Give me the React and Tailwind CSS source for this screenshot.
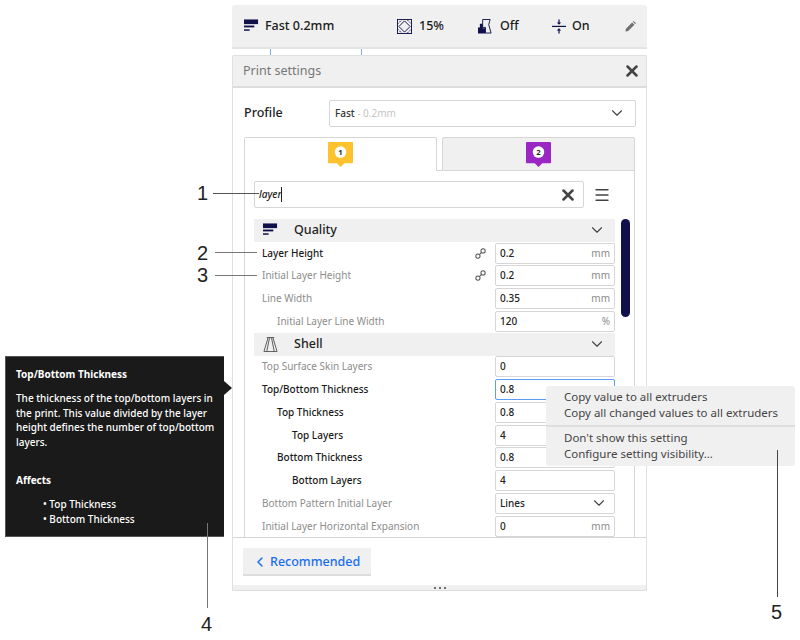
import React from "react";
import { ChevronDown, ChevronLeft, X, Menu } from "lucide-react";

const FONT = "font-['Noto_Sans',sans-serif]";

function ProfileIcon({ className }) {
  return (
    <svg viewBox="0 0 16 14" className={className} fill="#10114a">
      <rect x="0" y="0" width="15" height="5" />
      <rect x="0" y="6.5" width="11" height="2" />
      <rect x="0" y="10.5" width="6" height="1.6" />
    </svg>
  );
}

function InfillIcon() {
  return (
    <svg viewBox="0 0 16 16" className="w-[15px] h-[15px]" fill="none" stroke="#10114a" strokeWidth="1">
      <rect x="0.5" y="0.5" width="15" height="15" />
      <path d="M8 2 L14 8 L8 14 L2 8 Z" />
      <path d="M1 5 L5 1 M11 1 L15 5 M1 11 L5 15 M11 15 L15 11" strokeDasharray="1.5 1" />
    </svg>
  );
}

function SupportIcon() {
  return (
    <svg viewBox="0 0 15 16" className="w-[14px] h-[15px]">
      <path d="M5 0.5 H13 L11.5 6 L14 15 H8 V9 H5 Z" fill="none" stroke="#10114a" strokeWidth="1" />
      <path d="M0 15.5 V9 H2 V5 H5 V10 H8 V15.5 Z" fill="#10114a" />
    </svg>
  );
}

function AdhesionIcon() {
  return (
    <svg viewBox="0 0 16 16" className="w-[14px] h-[15px]" fill="#10114a">
      <rect x="0" y="7.2" width="16" height="1.4" />
      <path d="M8 0 L8 4.5 M8 11.5 L8 16" stroke="#10114a" strokeWidth="1.4" />
      <path d="M5.5 3.5 L8 6 L10.5 3.5 Z M5.5 12.5 L8 10 L10.5 12.5 Z" />
    </svg>
  );
}

function PencilIcon() {
  return (
    <svg viewBox="0 0 12 12" className="w-[11px] h-[11px]" fill="#707070">
      <path d="M0.5 11.5 L1 8.5 L7.8 1.7 L10.3 4.2 L3.5 11 Z" />
      <path d="M8.6 0.9 L9.5 0 L12 2.5 L11.1 3.4 Z" />
    </svg>
  );
}

function ShellIcon() {
  return (
    <svg viewBox="0 0 16 16" className="w-[15px] h-[15px]" fill="none" stroke="#555" strokeWidth="1">
      <path d="M4 0.5 H12" />
      <path d="M5.5 0.5 L1 15.5 H15 L10.5 0.5" />
      <path d="M7 0.5 L4 15.5 M9 0.5 L12 15.5" />
    </svg>
  );
}

function LinkIcon() {
  return (
    <svg viewBox="0 0 12 12" className="w-[11px] h-[11px] mr-[9px]" fill="none" stroke="#555" strokeWidth="1.1">
      <circle cx="8.8" cy="3.2" r="2.3" />
      <circle cx="3.2" cy="8.8" r="2.3" />
      <path d="M4.8 7.2 L7.2 4.8" />
    </svg>
  );
}

function ExtruderBadge({ color, n }) {
  return (
    <svg viewBox="0 0 26 26" className="w-[25px] h-[25px]">
      <path d="M1 0 H25 A1 1 0 0 1 26 1 V21 A1 1 0 0 1 25 22 H17 L13 26 L9 22 H1 A1 1 0 0 1 0 21 V1 A1 1 0 0 1 1 0 Z" fill={color} />
      <circle cx="13" cy="10.5" r="6" fill="#fff" />
      <text x="13" y="13.5" textAnchor="middle" fontSize="8" fontWeight="700" fill="#222" fontFamily="Noto Sans, sans-serif">{n}</text>
    </svg>
  );
}

function SectionHeader({ icon, title }) {
  return (
    <div className="h-[22.75px] bg-[#f0f0f0] flex items-center pl-[9px] pr-[9px]">
      <div className="w-[31px] flex items-center">{icon}</div>
      <span className="text-[12.5px] font-medium text-[#222]">{title}</span>
      <ChevronDown className="ml-auto w-[18px] h-[18px] text-[#444]" strokeWidth={1.5} />
    </div>
  );
}

function Row({ label, value, unit, indent = 0, active, link, focused, select }) {
  const pad = indent === 2 ? "pl-[38px]" : indent === 1 ? "pl-[23px]" : "pl-[8px]";
  return (
    <div className="h-[22.75px] flex items-center">
      <span className={`flex-1 ${pad} text-[10px] ${active ? "text-[#1a1a1a] font-medium" : "text-[#8c8c8c]"} whitespace-nowrap`}>{label}</span>
      {link && <LinkIcon />}
      <div className={`w-[120px] h-[21px] shrink-0 bg-white border ${focused ? "border-[#5b9cf5]" : "border-[#d6d6d6]"} rounded-[2px] flex items-center pl-[4px] pr-[4px] text-[10px] font-medium text-[#222]`}>
        <span>{value}</span>
        {unit && <span className="ml-auto font-normal text-[#8c8c8c]">{unit}</span>}
        {select && <ChevronDown className="ml-auto mr-[2px] w-[18px] h-[18px] text-[#444]" strokeWidth={1.5} />}
      </div>
    </div>
  );
}

export default function App() {
  return (
    <div className={`relative w-[800px] h-[640px] bg-white overflow-hidden ${FONT}`}>
      <div className="ml-[232px] w-[415px] pt-[5px]">
        {/* Top summary bar */}
        <div className="h-[44px] bg-[#f0f0f0] rounded-t-[3px] border-b-2 border-[#e4e4e4] flex items-center pl-[12px] pr-[11px] text-[12.5px] font-medium text-[#1a1a1a]">
          <div className="flex items-center gap-[6px] w-[153px]">
            <ProfileIcon className="w-[15px] h-[14px]" />
            <span>Fast 0.2mm</span>
          </div>
          <div className="flex items-center gap-[7px] w-[81px]">
            <InfillIcon />
            <span>15%</span>
          </div>
          <div className="flex items-center gap-[8px] w-[74px]">
            <SupportIcon />
            <span>Off</span>
          </div>
          <div className="flex items-center gap-[6px]">
            <AdhesionIcon />
            <span>On</span>
          </div>
          <div className="ml-auto">
            <PencilIcon />
          </div>
        </div>
        {/* ticks between bar and panel */}
        <div className="h-[6px] flex">
          <div className="ml-[38px] w-px bg-[#7fb0f0]" />
          <div className="ml-[90px] w-px bg-[#7fb0f0]" />
        </div>

        {/* Print settings panel */}
        <div className="h-[536px] border border-[#e0e0e0] border-b-0 rounded-t-[2px] flex flex-col">
          <div className="h-[32px] shrink-0 bg-[#f0f0f0] border-b-2 border-[#dcdcdc] flex items-center pl-[10px] pr-[5px]">
            <span className="text-[12.5px] text-[#777]">Print settings</span>
            <X className="ml-auto w-[18px] h-[18px] text-[#444]" strokeWidth={3.4} />
          </div>

          <div className="h-[12px] shrink-0" />
          <div className="h-[26px] shrink-0 flex items-center pl-[11px] pr-[10px]">
            <span className="w-[85px] text-[12.5px] font-medium text-[#222]">Profile</span>
            <div className="flex-1 h-[27px] border border-[#d6d6d6] rounded-[2px] flex items-center pl-[5px] pr-[9px] text-[10px]">
              <span className="text-[#333] font-medium">Fast</span>
              <span className="text-[#c4c4c4]">&nbsp;- 0.2mm</span>
              <ChevronDown className="ml-auto w-[18px] h-[18px] text-[#444]" strokeWidth={1.5} />
            </div>
          </div>

          <div className="h-[11px] shrink-0" />
          {/* Extruder tabs */}
          <div className="h-[34px] shrink-0 flex pl-[11px] pr-[11px]">
            <div className="w-[193px] h-[34px] bg-white border border-b-0 border-[#d6d6d6] rounded-t-[2px] flex justify-center pt-[4px] relative z-10">
              <ExtruderBadge color="#fec22f" n="1" />
            </div>
            <div className="w-[5px] border-b border-[#d6d6d6]" />
            <div className="flex-1 h-[34px] bg-[#f0f0f0] border border-[#d6d6d6] rounded-t-[2px] flex justify-center pt-[4px]">
              <ExtruderBadge color="#9a27c4" n="2" />
            </div>
          </div>

          {/* Tab body */}
          <div className="h-[367px] shrink-0 mx-[11px] border-x border-[#d6d6d6] -mt-px overflow-hidden">
            <div className="h-[11px]" />
            <div className="flex items-center pl-[9px] h-[27px]">
              <div className="w-[330px] h-[27px] border border-[#d6d6d6] rounded-[2px] flex items-center pl-[4px] pr-[6px]">
                <span className="text-[10px] italic font-medium text-[#222]">layer</span>
                <span className="w-px h-[15px] bg-[#222]" />
                <X className="ml-auto w-[18px] h-[18px] text-[#444]" strokeWidth={3.4} />
              </div>
              <Menu className="ml-[9px] w-[18px] h-[18px] text-[#444]" strokeWidth={1.8} />
            </div>
            <div className="h-[11px]" />

            <div className="flex pl-[9px]">
              <div className="w-[361px] shrink-0">
                <SectionHeader icon={<ProfileIcon className="w-[15px] h-[14px]" />} title="Quality" />
                <Row label="Layer Height" value="0.2" unit="mm" active link />
                <Row label="Initial Layer Height" value="0.2" unit="mm" link />
                <Row label="Line Width" value="0.35" unit="mm" />
                <Row label="Initial Layer Line Width" value="120" unit="%" indent={1} />
                <SectionHeader icon={<ShellIcon />} title="Shell" />
                <Row label="Top Surface Skin Layers" value="0" />
                <Row label="Top/Bottom Thickness" value="0.8" active focused />
                <Row label="Top Thickness" value="0.8" indent={1} active />
                <Row label="Top Layers" value="4" indent={2} active />
                <Row label="Bottom Thickness" value="0.8" indent={1} active />
                <Row label="Bottom Layers" value="4" indent={2} active />
                <Row label="Bottom Pattern Initial Layer" value="Lines" select />
                <Row label="Initial Layer Horizontal Expansion" value="0" unit="mm" />
              </div>
              {/* scrollbar */}
              <div className="ml-[6px] w-[9px] h-[98px] rounded-full bg-[#10114a]" />
            </div>
          </div>

          {/* Footer */}
          <div className="flex-1 border-t border-[#d6d6d6] pt-[10px] pl-[10px]">
            <button className="w-[128px] h-[28px] bg-[#f0f0f0] border-b-2 border-[#dcdcdc] flex items-center pl-[9px] pt-[2px] gap-[2px] text-[12.5px] font-medium text-[#196ef0]">
              <ChevronLeft className="w-[16px] h-[16px]" strokeWidth={2.2} />
              <span>Recommended</span>
            </button>
          </div>
          <div className="h-[6px] shrink-0 bg-[#f0f0f0] border-b border-[#dcdcdc] rounded-b-[2px] flex items-center justify-center gap-[3px]">
            <span className="w-[2px] h-[2px] rounded-full bg-[#444]" />
            <span className="w-[2px] h-[2px] rounded-full bg-[#444]" />
            <span className="w-[2px] h-[2px] rounded-full bg-[#444]" />
          </div>
        </div>
      </div>

      {/* Tooltip */}
      <div className="absolute left-[5px] top-[356px] w-[219px] h-[181px] bg-[#1a1a1a] border border-[#555] border-r-0 pl-[10px] pr-[4px] pt-[10px] text-[10px] leading-[14.4px] text-white font-medium">
        <div className="font-bold">Top/Bottom Thickness</div>
        <p className="mt-[10px]">The thickness of the top/bottom layers in the print. This value divided by the layer height defines the number of top/bottom layers.</p>
        <div className="font-bold mt-[24px]">Affects</div>
        <ul className="mt-[10px] pl-[27px]">
          <li>• Top Thickness</li>
          <li>• Bottom Thickness</li>
        </ul>
      </div>
      <div className="absolute left-[224px] top-[381px] w-0 h-0 border-y-[7.5px] border-y-transparent border-l-[8px] border-l-[#1a1a1a]" />

      {/* Context menu */}
      <div className="absolute left-[546px] top-[386px] w-[249px] h-[80px] bg-[#f0f0f0] rounded-[3px] text-[11.5px] leading-[16px] text-[#444] pl-[18px]">
        <div className="pt-[3px]">Copy value to all extruders</div>
        <div>Copy all changed values to all extruders</div>
        <div className="-ml-[18px] mt-[4px] h-[2px] bg-[#dedede]" />
        <div className="mt-[3px]">Don't show this setting</div>
        <div>Configure setting visibility...</div>
      </div>

      {/* Callouts */}
      <div className="absolute left-[197px] top-[181px] text-[20px] leading-[24px] font-['Liberation_Sans',sans-serif] text-[#222]">1</div>
      <div className="absolute left-[213px] top-[193px] w-[46px] h-px bg-[#555]" />
      <div className="absolute left-[197px] top-[241px] text-[20px] leading-[24px] font-['Liberation_Sans',sans-serif] text-[#222]">2</div>
      <div className="absolute left-[215px] top-[252px] w-[42px] h-px bg-[#777]" />
      <div className="absolute left-[197px] top-[263px] text-[20px] leading-[24px] font-['Liberation_Sans',sans-serif] text-[#222]">3</div>
      <div className="absolute left-[215px] top-[275px] w-[42px] h-px bg-[#777]" />
      <div className="absolute left-[207px] top-[523px] w-px h-[85px] bg-[#777]" />
      <div className="absolute left-[201px] top-[612px] text-[20px] leading-[24px] font-['Liberation_Sans',sans-serif] text-[#222]">4</div>
      <div className="absolute left-[777px] top-[450px] w-px h-[147px] bg-[#444]" />
      <div className="absolute left-[771px] top-[600px] text-[20px] leading-[24px] font-['Liberation_Sans',sans-serif] text-[#222]">5</div>
    </div>
  );
}
